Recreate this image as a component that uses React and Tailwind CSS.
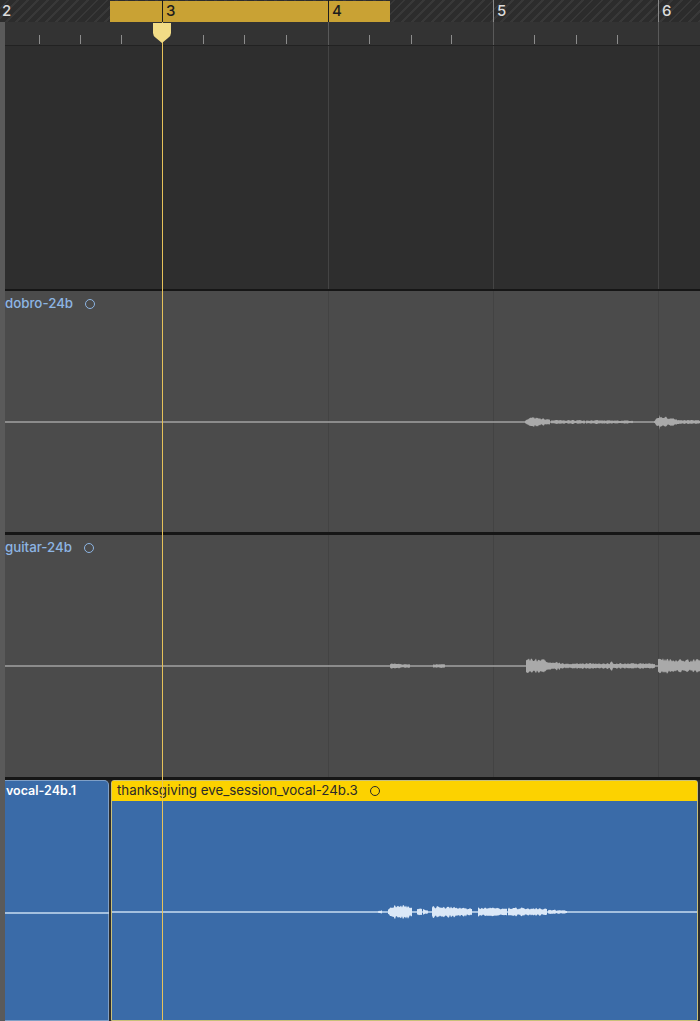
import React from "react";

const FONT = { fontFamily: '"Inter", "Liberation Sans", sans-serif' };

// bar lines on the timeline (page x)
const BARS = [
  { n: "2", x: -2 },
  { n: "3", x: 162 },
  { n: "4", x: 328 },
  { n: "5", x: 493 },
  { n: "6", x: 658 },
];
const TICKS = [39, 80, 121, 203, 244, 286, 369, 411, 451, 534, 576, 617];

// tiny seeded random so the waveform is stable
const rng = (seed) => () => {
  seed = (seed * 16807) % 2147483647;
  return (seed - 1) / 2147483646;
};

const wavePath = (segments, mid, seed) => {
  const r = rng(seed);
  let d = "";
  segments.forEach(([x0, x1, a0, a1]) => {
    const top = [];
    const bot = [];
    for (let x = x0; x <= x1; x++) {
      const t = (x - x0) / Math.max(1, x1 - x0);
      const amp = (a0 + (a1 - a0) * t) * (0.55 + 0.45 * r());
      top.push(`${x},${(mid - amp).toFixed(1)}`);
      bot.unshift(`${x},${(mid + amp * (0.8 + 0.3 * r())).toFixed(1)}`);
    }
    d += `M${top.join("L")}L${bot.join("L")}Z`;
  });
  return d;
};

const MID = 131;

const Waveform = ({ segments, color, lineColor, seed }) => (
  <svg className="absolute inset-0" width="100%" height="100%">
    <line x1="0" x2="700" y1={MID} y2={MID} stroke={lineColor} strokeWidth="1.5" />
    <path d={wavePath(segments, MID, seed)} fill={color} />
  </svg>
);

const GridLines = ({ color }) => (
  <>
    {[328, 493, 658].map((x) => (
      <div
        key={x}
        className="absolute top-0 bottom-0 w-px"
        style={{ left: x - 5, background: color }}
      />
    ))}
  </>
);

const TrackName = ({ name }) => (
  <div className="absolute left-0 top-[3px] flex items-center gap-[12px] text-[13.3px] font-medium text-[#8db5e3]">
    <span>{name}</span>
    <span className="w-[10px] h-[10px] rounded-full border-[1.5px] border-[#8db5e3]" />
  </div>
);

const AudioTrack = ({ name, segments, seed, h }) => (
  <div className={`relative bg-[#4b4b4b] ${h}`}>
    <GridLines color="#434343" />
    <Waveform segments={segments} color="#a9a9a9" lineColor="#a2a2a2" seed={seed} />
    <TrackName name={name} />
  </div>
);

export default function App() {
  return (
    <div className="relative w-[700px] h-[1021px] overflow-hidden bg-[#1c1c1c] select-none" style={FONT}>
      {/* bar ruler */}
      <div className="relative h-[22px] bg-[repeating-linear-gradient(135deg,#2c2c2c_0px,#2c2c2c_5px,#383838_5px,#383838_7px)]">
        <div className="absolute top-[1px] bottom-0 left-[110px] w-[280px] bg-[#c9a234]" />
        {BARS.map((b) => {
          const inCycle = b.x > 110 && b.x < 390;
          return (
            <div key={b.n} className="absolute top-0 h-[22px] flex" style={{ left: b.x }}>
              <div className={`w-px h-full ${inCycle ? "bg-[#1d1d1d]" : "bg-[#8a8a8a]"}`} />
              <span
                className={`pl-[3px] pt-[2px] text-[15px] leading-[18px] font-medium ${inCycle ? "text-[#1d1d1d]" : "text-[#dcdcdc]"}`}
              >
                {b.n}
              </span>
            </div>
          );
        })}
      </div>

      <div className="flex h-[999px]">
        <div className="w-[5px] bg-[#5a5a5a]" />
        <div className="flex-1 flex flex-col">
          {/* beat ruler */}
          <div className="relative h-[24px] bg-[#333333] border-b border-[#222]">
            <GridLines color="#5a5a5a" />
            {TICKS.map((x) => (
              <div key={x} className="absolute top-[13px] h-[9px] w-px bg-[#8c8c8c]" style={{ left: x - 5 }} />
            ))}
          </div>

          {/* empty area */}
          <div className="relative h-[243px] bg-[#2e2e2e]">
            <GridLines color="#444444" />
          </div>
          <div className="h-[2px] bg-[#161616]" />

          <AudioTrack
            name="dobro-24b"
            h="h-[241px]"
            seed={7}
            segments={[
              [520, 528, 2, 6],
              [528, 545, 5, 3],
              [546, 580, 2, 2],
              [581, 628, 2, 1.5],
              [649, 655, 1, 8],
              [655, 672, 7, 3],
              [672, 695, 2, 2],
            ]}
          />
          <div className="h-[3px] bg-[#161616]" />

          <AudioTrack
            name="guitar-24b"
            h="h-[242px]"
            seed={13}
            segments={[
              [385, 405, 2.5, 2],
              [428, 440, 2, 2],
              [521, 540, 8, 7],
              [540, 555, 6, 4],
              [555, 605, 3, 3],
              [605, 612, 5, 3],
              [612, 650, 3, 3],
              [653, 695, 8, 7],
            ]}
          />
          <div className="h-[3px] bg-[#161616]" />

          {/* vocal track */}
          <div className="h-[241px] flex bg-[#2c2c2c] gap-[2px]">
            <div className="relative w-[104px] bg-[#3a6ba8] rounded-tr-[5px] border border-l-0 border-[#7f9fc6]">
              <div className="px-[1px] pt-[1px] text-[12.5px] font-semibold text-white">vocal-24b.1</div>
              <svg className="absolute left-0 top-[131px]" width="104" height="2">
                <line x1="0" x2="104" y1="1" y2="1" stroke="#c9dcf2" strokeWidth="1.5" />
              </svg>
            </div>
            <div className="relative flex-1 flex flex-col mr-[2px] border border-[#c9c07a] rounded-tl-[3px] rounded-tr-[3px] bg-[#3a6ba8]">
              <div className="h-[20px] bg-[#fcd200] flex items-center gap-[12px] pl-[5px] text-[13.3px] text-[#2a2a2a]">
                <span>thanksgiving eve_session_vocal-24b.3</span>
                <span className="w-[10px] h-[10px] rounded-full border-[1.5px] border-[#2a2a2a]" />
              </div>
              <div className="relative flex-1">
                <svg className="absolute inset-0" width="100%" height="100%">
                  <line x1="0" x2="600" y1="111" y2="111" stroke="#c9dcf2" strokeWidth="1.5" />
                  <path
                    fill="#dbe8f7"
                    d={wavePath(
                      [
                        [266, 270, 1, 2],
                        [276, 282, 4, 8],
                        [282, 300, 8, 6],
                        [305, 310, 3, 5],
                        [311, 316, 4, 2],
                        [320, 345, 6, 6],
                        [345, 360, 6, 4],
                        [366, 395, 5, 4],
                        [396, 435, 5, 4],
                        [436, 455, 3, 1.5],
                      ],
                      111,
                      29
                    )}
                  />
                </svg>
              </div>
            </div>
          </div>
        </div>
      </div>

      {/* playhead */}
      <div className="absolute left-[162px] top-[22px] bottom-0 w-px bg-[#e6c25a]" />
      <svg className="absolute left-[151px] top-[22px]" width="22" height="22">
        <path d="M2 1 H20 V11 Q20 14 17 16 L11 21 L5 16 Q2 14 2 11 Z" fill="#f2dc86" />
      </svg>
    </div>
  );
}
